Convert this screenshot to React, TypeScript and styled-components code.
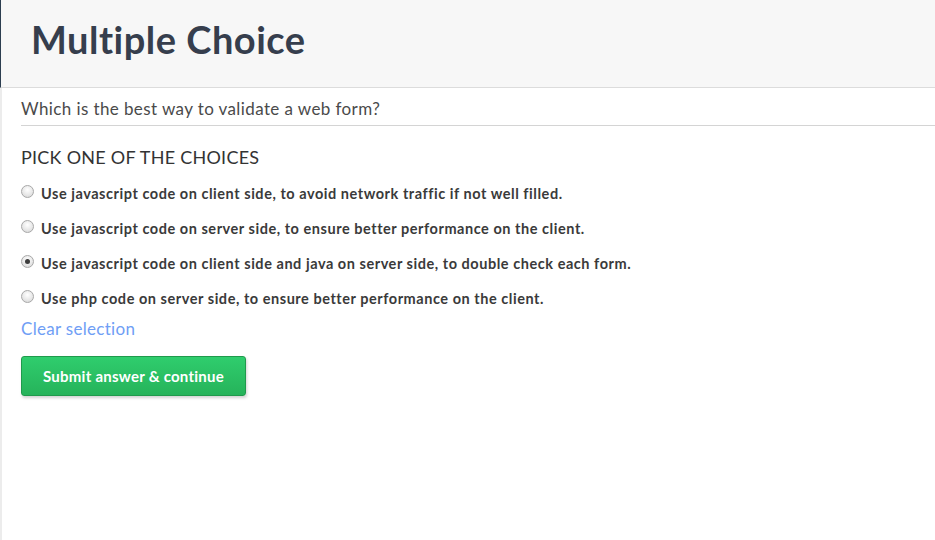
import React, { useState } from "react";
import styled, { createGlobalStyle } from "styled-components";

const Global = createGlobalStyle`
  html, body { margin: 0; padding: 0; background: #fff; }
  body { font-family: Lato, "Open Sans", sans-serif; }
`;

const Page = styled.div`
  width: 935px;
  height: 540px;
  background: #fff;
  overflow: hidden;
  display: flex;
  flex-direction: column;
`;

const Header = styled.header`
  flex-shrink: 0;
  background: #f7f7f7;
  border-bottom: 1px solid #dcdcdc;
  border-left: 1px solid #2c3e50;
  padding: 16px 0 0 30px;
  height: 71px;
`;

const Title = styled.h1`
  margin: 0;
  font-size: 38px;
  line-height: 46px;
  font-weight: 700;
  color: #363e4d;
  letter-spacing: 0.5px;
`;

const Body = styled.main`
  flex: 1;
  border-left: 2px solid #ececec;
  padding: 0 0 0 19px;
`;

const Question = styled.div`
  font-size: 17px;
  color: #4a4a4a;
  letter-spacing: 0.4px;
  padding: 10px 0 6px 0;
  border-bottom: 1px solid #d4d4d4;
`;

const Heading = styled.h2`
  margin: 20px 0 0 0;
  font-size: 18px;
  font-weight: 400;
  color: #333;
  letter-spacing: 0.25px;
  text-transform: uppercase;
`;

const List = styled.div`
  display: flex;
  flex-direction: column;
  margin-top: 8px;
`;

const Option = styled.label`
  display: flex;
  align-items: center;
  gap: 7px;
  height: 35px;
  font-size: 14.5px;
  font-weight: 700;
  letter-spacing: 0.54px;
  color: #3a3a3a;
  cursor: pointer;
`;

const Radio = styled.span<{ $on: boolean }>`
  width: 13px;
  height: 13px;
  border-radius: 50%;
  box-sizing: border-box;
  border: 1px solid #a8a8a8;
  background: radial-gradient(circle at 50% 35%, #ffffff 0%, #e6e6e6 60%, #d2d2d2 100%);
  margin-top: -4px;
  display: flex;
  align-items: center;
  justify-content: center;
  flex-shrink: 0;
  &::after {
    content: "";
    display: ${(p) => (p.$on ? "block" : "none")};
    width: 5px;
    height: 5px;
    border-radius: 50%;
    background: #3d3d3d;
  }
`;

const Clear = styled.a`
  display: inline-block;
  font-size: 17px;
  letter-spacing: 0.3px;
  color: #6f9ef5;
  margin-top: 2px;
  cursor: pointer;
`;

const Submit = styled.button`
  margin-top: 17px;
  width: 225px;
  height: 40px;
  border: 1px solid #1f9a4c;
  border-radius: 3px;
  background: linear-gradient(#2fcd6d, #26b35a);
  box-shadow: 1px 2px 3px rgba(0, 0, 0, 0.18);
  color: #fff;
  font-family: Lato, "Open Sans", sans-serif;
  font-size: 15px;
  font-weight: 700;
  letter-spacing: 0.25px;
  cursor: pointer;
  display: block;
`;

const options = [
  "Use javascript code on client side, to avoid network traffic if not well filled.",
  "Use javascript code on server side, to ensure better performance on the client.",
  "Use javascript code on client side and java on server side, to double check each form.",
  "Use php code on server side, to ensure better performance on the client.",
];

export default function App() {
  const [sel, setSel] = useState<number | null>(2);
  return (
    <Page>
      <Global />
      <Header>
        <Title>Multiple Choice</Title>
      </Header>
      <Body>
        <Question>Which is the best way to validate a web form?</Question>
        <Heading>Pick one of the choices</Heading>
        <List>
          {options.map((o, i) => (
            <Option key={i} onClick={() => setSel(i)}>
              <Radio $on={sel === i} />
              {o}
            </Option>
          ))}
        </List>
        <Clear onClick={() => setSel(null)}>Clear selection</Clear>
        <Submit>Submit answer &amp; continue</Submit>
      </Body>
    </Page>
  );
}
